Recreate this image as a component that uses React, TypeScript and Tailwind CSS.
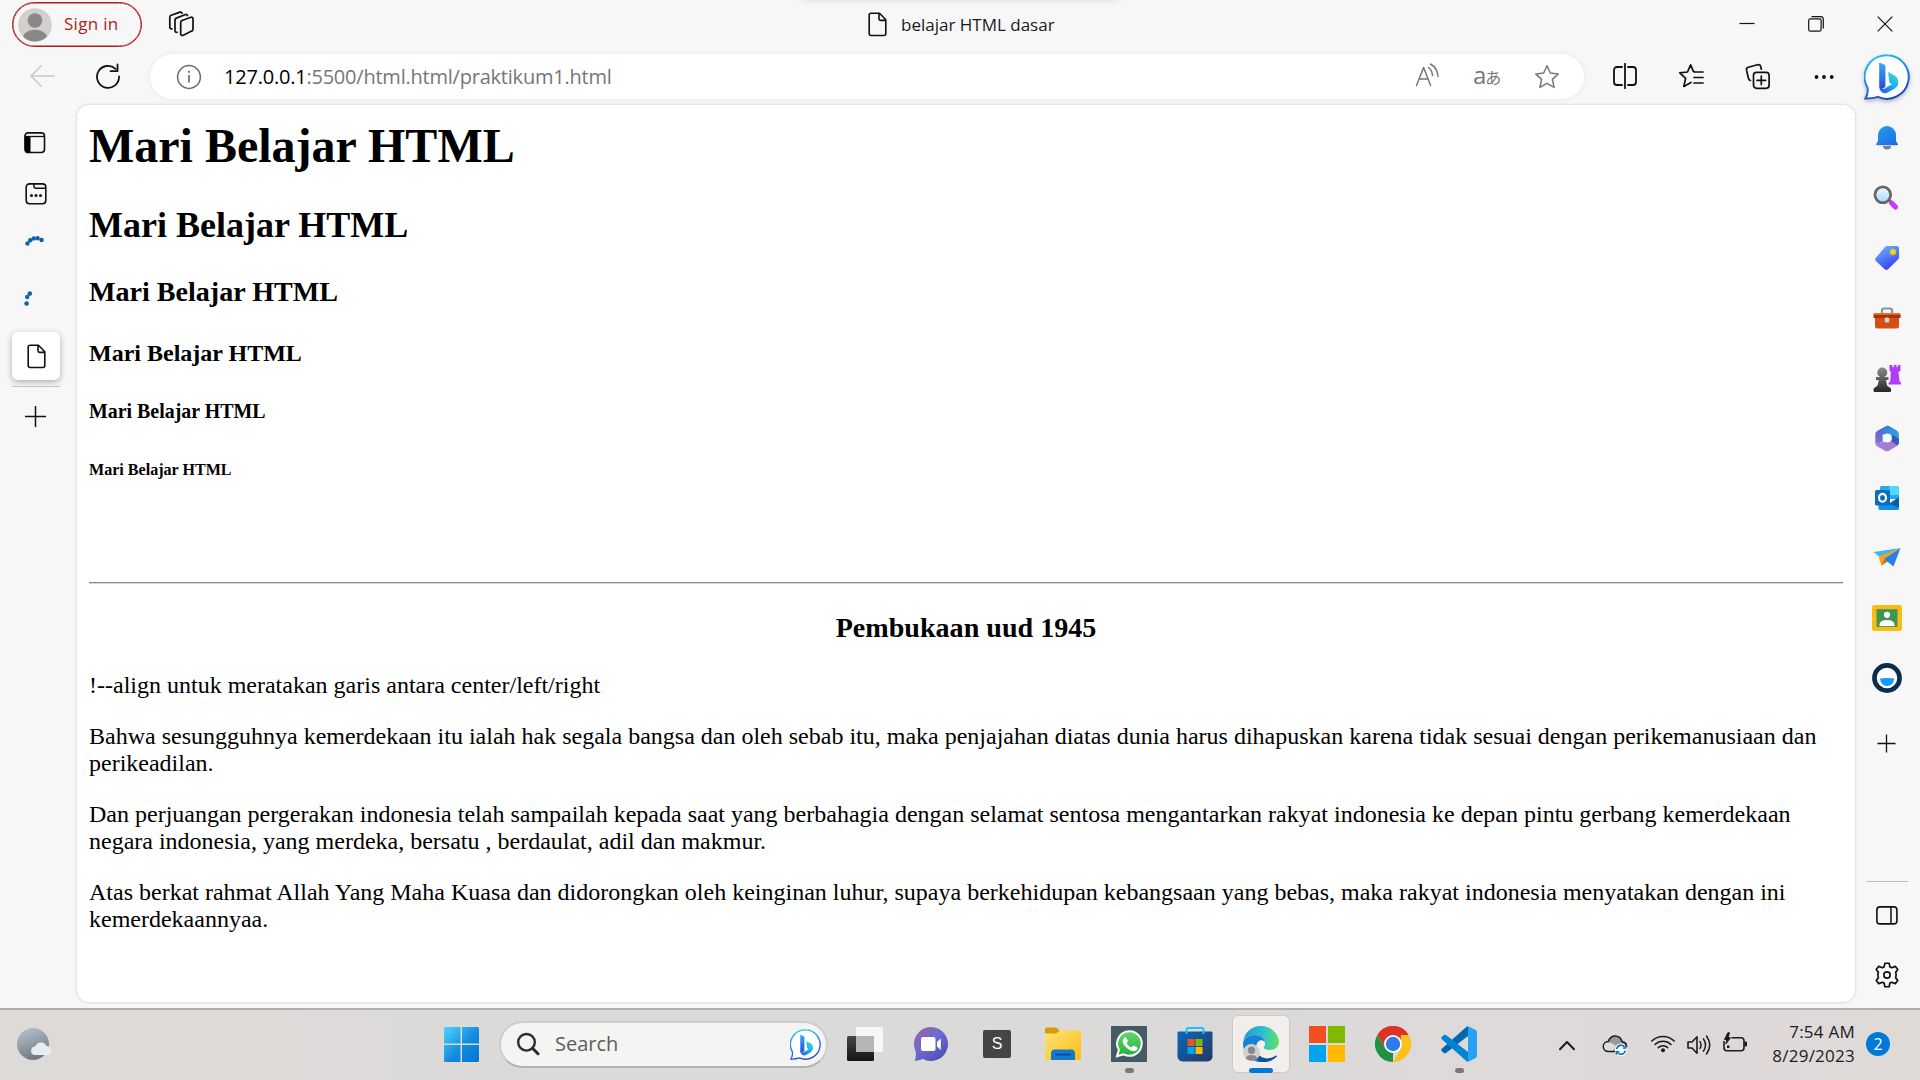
import React from 'react';

type SvgProps = {
  w: number;
  h: number;
  className?: string;
  children: React.ReactNode;
};

function Svg({ w, h, className = '', children }: SvgProps) {
  return (
    <svg width={w} height={h} viewBox={`0 0 ${w} ${h}`} fill="none" className={`block shrink-0 ${className}`}>
      {children}
    </svg>
  );
}

function DocIcon() {
  return (
    <Svg w={19} h={25}>
      <path d="M3 1.2h8.5l6.3 6.6V21.5a2 2 0 0 1-2 2H3.2a2 2 0 0 1-2-2V3a1.8 1.8 0 0 1 1.8-1.8zM11 1.5v5.3a1.6 1.6 0 0 0 1.6 1.6h5" stroke="#111" strokeWidth="1.6" strokeLinejoin="round" />
    </Svg>
  );
}

function BingIcon({ size, id }: { size: number; id: string }) {
  return (
    <svg width={size} height={size} viewBox="0 0 46 46" fill="none" className="block shrink-0">
      <defs>
        <linearGradient id={`${id}-ring`} x1="10" y1="2" x2="28" y2="46" gradientUnits="userSpaceOnUse">
          <stop stopColor="#18c8f0" />
          <stop offset="0.5" stopColor="#2a7cf0" />
          <stop offset="1" stopColor="#1a3fc4" />
        </linearGradient>
        <linearGradient id={`${id}-stem`} x1="0" y1="8" x2="0" y2="36" gradientUnits="userSpaceOnUse">
          <stop stopColor="#34aef8" />
          <stop offset="1" stopColor="#2348e0" />
        </linearGradient>
        <linearGradient id={`${id}-bowl`} x1="34" y1="20" x2="18" y2="40" gradientUnits="userSpaceOnUse">
          <stop stopColor="#2fe3c0" />
          <stop offset="0.45" stopColor="#1fb4f4" />
          <stop offset="1" stopColor="#2456e4" />
        </linearGradient>
      </defs>
      <path d="M23 1.2a21.8 21.8 0 1 1-9 41.7c-4 1.3-8 1.8-12.6 1.7 2-3.2 2.6-7 2.3-10.4A21.8 21.8 0 0 1 23 1.2z" fill="#fff" stroke={`url(#${id}-ring)`} strokeWidth="2" />
      <path d="M15.5 8.5l5 2.2q.9.5.9 1.6V33l-4.2 2.6q-2-.6-2-3V9z" fill={`url(#${id}-stem)`} />
      <path d="M24 18l7 3.7q3.2 2 3.2 6v1q0 3.6-3.4 5.8L23.600 38.600q-3 1.600-6-.6-2.200-1.800-2.300-5.400 2 3.400 5.500 1.800l7-4.200-2.300-1.600z" fill={`url(#${id}-bowl)`} />
    </svg>
  );
}

function Avatar({ size }: { size: number }) {
  return (
    <svg width={size} height={size} viewBox="0 0 34 34" className="block shrink-0">
      <circle cx="17" cy="17" r="16.800" fill="#d2d0ce" />
      <circle cx="17" cy="12.500" r="7.300" fill="#8a8886" />
      <path d="M5 28.500C8 19.500 26 19.500 29 28.500A16.800 16.800 0 0 1 5 28.500z" fill="#8a8886" />
    </svg>
  );
}

function TitleBar() {
  return (
    <header className="relative flex h-[54px] shrink-0 items-start pl-3">
      <div className="absolute left-[800px] top-[-8px] h-[8px] w-[320px] rounded-full shadow-[0_0_6px_rgba(0,0,0,0.12)]" />
      <button className="mt-[2px] flex h-[45px] w-[130px] items-center rounded-full border-[1.500px] border-[#b01c20] pl-[5px] shadow-[inset_0_0_0_0.500px_#b01c20]">
        <Avatar size={34} />
        <span className="ml-[12px] mt-[-2px] whitespace-nowrap text-[17px] leading-none tracking-[0.300px] text-[#b01c20]">Sign in</span>
      </button>
      <Svg w={26} h={26} className="ml-[26px] mt-[11px]">
        <g stroke="#111" strokeWidth="1.700" strokeLinejoin="round" strokeLinecap="round">
          <path d="M14 9.500l9-3.200a1.500 1.500 0 0 1 2 1.400v10.500a2 2 0 0 1-1.300 1.900l-9 4.300a1.500 1.500 0 0 1-2-1.400V11.500a2 2 0 0 1 1.300-2z" />
          <path d="M9 21.300a1.600 1.600 0 0 1-2-1.500V9a2 2 0 0 1 1.300-1.900l9.200-3.600q1.500-.4 2 1" />
          <path d="M4 17.800a1.600 1.600 0 0 1-2.200-1.500V6.200a2 2 0 0 1 1.300-1.900l9-3.200q1.400-.4 2 1" />
        </g>
      </Svg>
      <div className="ml-[674px] flex pt-[12px]">
        <DocIcon />
        <span className="ml-[14px] mt-[3px] whitespace-nowrap text-[17px] leading-[20px] text-[#1a1a1a]">belajar HTML dasar</span>
      </div>
      <div className="ml-auto flex gap-[53px] pr-[27px] pt-[16px]">
        <Svg w={16} h={16}><path d="M0.500 7.500h15" stroke="#111" strokeWidth="1.200" /></Svg>
        <Svg w={16} h={16}>
          <rect x="0.700" y="2.800" width="12.400" height="12.400" rx="1.800" stroke="#111" strokeWidth="1.200" />
          <path d="M3.500.7h9a2.800 2.800 0 0 1 2.800 2.800v9" stroke="#111" strokeWidth="1.200" />
        </Svg>
        <Svg w={16} h={16}><path d="M.7.7l14.600 14.600M15.300.7L.7 15.300" stroke="#111" strokeWidth="1.200" /></Svg>
      </div>
    </header>
  );
}

function AddressRow() {
  return (
    <div className="flex h-[45px] shrink-0 items-center">
      <Svg w={26} h={24} className="ml-[29px] mt-[-2px]">
        <path d="M12 2L2 12l10 10M2 12h23" stroke="#c9c9c9" strokeWidth="1.600" strokeLinecap="round" strokeLinejoin="round" />
      </Svg>
      <Svg w={26} h={26} className="ml-[40px] mt-[-2px]">
        <path d="M20.500 5.800A11 11 0 1 0 24 13.500M22.500 1.500v6.700h-7" stroke="#111" strokeWidth="1.800" strokeLinecap="round" strokeLinejoin="round" />
      </Svg>
      <div className="ml-[29px] flex h-[45px] w-[1434px] items-center rounded-full bg-white shadow-[0_0_5px_rgba(0,0,0,0.08)]">
        <Svg w={26} h={26} className="ml-[26px]">
          <circle cx="13" cy="13" r="11.400" stroke="#6b6b6b" strokeWidth="1.500" />
          <path d="M13 11v7.500" stroke="#6b6b6b" strokeWidth="1.700" />
          <circle cx="13" cy="7.800" r="1.100" fill="#6b6b6b" />
        </Svg>
        <span className="ml-[22px] whitespace-nowrap text-[20px] leading-none tracking-[-0.220px] text-[#767676]"><span className="text-black">127.0.0.1</span>:5500/html.html/praktikum1.html</span>
        <Svg w={26} h={24} className="ml-auto mt-[-3px]">
          <path d="M1.500 22.500L8.600 4.500l7 18M4 16h9.200" stroke="#777" strokeWidth="1.500" strokeLinecap="round" strokeLinejoin="round" />
          <path d="M13.500 4.500q3.500 2.500 4 8M15.500 1q7 4 7.500 12.500" stroke="#777" strokeWidth="1.500" strokeLinecap="round" />
        </Svg>
        <div className="ml-[32px] flex w-[29px] items-baseline text-[#777]">
          <span className="mt-[-6px] text-[24px] leading-[24px] tracking-[-1px]">a</span>
          <span className="font-['Noto_Sans_CJK_JP',sans-serif] text-[16px] leading-[24px]">あ</span>
        </div>
        <Svg w={26} h={26} className="ml-[32px] mr-[24px]">
          <path d="M13 1.700l3.300 7.300 8 .9-5.900 5.500 1.700 8-7.100-4-7.100 4 1.700-8L1.700 9.900l8-.9z" stroke="#777" strokeWidth="1.500" strokeLinejoin="round" />
        </Svg>
      </div>
      <Svg w={26} h={26} className="ml-[28px] mt-[-1px]">
        <path d="M10 4H5a3 3 0 0 0-3 3v12a3 3 0 0 0 3 3h5M16 4h5a3 3 0 0 1 3 3v12a3 3 0 0 1-3 3h-5M13 .8v24.400" stroke="#111" strokeWidth="1.800" strokeLinecap="round" />
      </Svg>
      <Svg w={27} h={26} className="ml-[40px] mt-[-1px]">
        <path d="M16.500 8.800l-1-.1L12.600 1.800 9.500 9l-7.700.9 5.800 5.500-1.800 8.100 7.200-4M17 9h8M16 14.500h9M16 20h9" stroke="#111" strokeWidth="1.700" strokeLinejoin="round" strokeLinecap="round" />
      </Svg>
      <Svg w={26} h={27} className="ml-[40px] mt-[-1px]">
        <rect x="8.500" y="9.300" width="15.600" height="16" rx="3" stroke="#111" strokeWidth="1.700" />
        <path d="M16.300 13v8.500M12 17.300h8.600M5.500 17.500q-1.600-.3-2-2L1.500 7.200q-.4-2.300 1.700-3L12.500 1.800q2.500-.5 3.200 1.700l.6 2.700" stroke="#111" strokeWidth="1.700" strokeLinecap="round" />
      </Svg>
      <Svg w={20} h={6} className="ml-[43px]">
        <circle cx="2.500" cy="3" r="1.900" fill="#111" /><circle cx="10" cy="3" r="1.900" fill="#111" /><circle cx="17.700" cy="3" r="1.900" fill="#111" />
      </Svg>
      <div className="ml-[30px] drop-shadow-[0_2px_2px_rgba(0,0,0,0.25)]"><BingIcon size={46} id="bing-top" /></div>
    </div>
  );
}

function TabRail() {
  return (
    <aside className="flex w-[77px] shrink-0 flex-col">
      <Svg w={22} h={22} className="ml-[24px] mt-[27px]">
        <rect x=".9" y=".9" width="19.600" height="19.600" rx="3.200" stroke="#111" strokeWidth="1.600" />
        <path d="M1 4.700h5.500v16H4a3 3 0 0 1-3-3z" fill="#000" /><path d="M1 4.500h19.500" stroke="#111" strokeWidth="1.300" />
      </Svg>
      <Svg w={22} h={22} className="ml-[25px] mt-[29px]">
        <rect x="1.200" y=".9" width="19.600" height="19.800" rx="3.200" stroke="#111" strokeWidth="1.600" />
        <path d="M9 1v2.500a1.800 1.800 0 0 0 1.800 1.800h10" stroke="#111" strokeWidth="1.500" />
        <circle cx="6.500" cy="12.500" r="1.500" fill="#111" /><circle cx="11" cy="12.500" r="1.500" fill="#111" /><circle cx="15.500" cy="12.500" r="1.500" fill="#111" />
      </Svg>
      <Svg w={20} h={11} className="ml-[25px] mt-[30px]">
        <g fill="#0d62a9"><circle cx="2.500" cy="8.500" r="2.200" /><circle cx="5.200" cy="5.200" r="2.200" /><circle cx="8.800" cy="3.400" r="2.200" /><circle cx="12.600" cy="3.200" r="2.200" /><circle cx="16.600" cy="5" r="2.200" /></g>
      </Svg>
      <Svg w={10} h={16} className="ml-[24px] mt-[45px]">
        <g fill="#0d62a9"><circle cx="5.800" cy="2.600" r="2.300" /><circle cx="3.200" cy="6" r="2.200" /><circle cx="2.600" cy="12.500" r="2.300" /></g>
      </Svg>
      <div className="ml-[12px] mt-[25px] flex h-[48px] w-[48px] items-center justify-center rounded-[6px] bg-white shadow-[0_2px_6px_rgba(0,0,0,0.3)]"><DocIcon /></div>
      <div className="ml-[12px] mt-[6px] h-px w-[48px] bg-[#c4c4c4]" />
      <Svg w={22} h={22} className="ml-[24px] mt-[18px]"><path d="M11.500 1v21M1 11.500h21" stroke="#111" strokeWidth="1.500" /></Svg>
    </aside>
  );
}

const paragraphs: [string, string][] = [
  ['Bahwa sesungguhnya kemerdekaan itu ialah hak segala bangsa dan oleh sebab itu, maka penjajahan diatas dunia harus dihapuskan karena tidak sesuai dengan perikemanusiaan dan', 'perikeadilan.'],
  ['Dan perjuangan pergerakan indonesia telah sampailah kepada saat yang berbahagia dengan selamat sentosa mengantarkan rakyat indonesia ke depan pintu gerbang kemerdekaan', 'negara indonesia, yang merdeka, bersatu , berdaulat, adil dan makmur.'],
  ['Atas berkat rahmat Allah Yang Maha Kuasa dan didorongkan oleh keinginan luhur, supaya berkehidupan kebangsaan yang bebas, maka rakyat indonesia menyatakan dengan ini', 'kemerdekaannyaa.'],
];

function Page() {
  return (
    <main className="w-[1778px] shrink-0 rounded-[12px] bg-white px-3 pt-[13px] font-['Liberation_Serif',serif] text-[24px] leading-[27px] text-black shadow-[0_0_3px_rgba(0,0,0,0.22)]">
      <h1 className="text-[48px] font-bold leading-[55px]">Mari Belajar HTML</h1>
      <h2 className="mt-[32px] text-[36px] font-bold leading-[41px]">Mari Belajar HTML</h2>
      <h3 className="mt-[30px] text-[28.080px] font-bold leading-[32px]">Mari Belajar HTML</h3>
      <h4 className="mt-[32px] text-[24px] font-bold leading-[27px]">Mari Belajar HTML</h4>
      <h5 className="mt-[33px] text-[19.920px] font-bold leading-[23px]">Mari Belajar HTML</h5>
      <h6 className="mt-[38px] text-[16.080px] font-bold leading-[18px]">Mari Belajar HTML</h6>
      <hr className="mt-[103px] h-[2px] border-0 border-t border-[#8a8a8a] bg-[#d8d8d8]" />
      <h3 className="mt-[28px] text-center text-[28.080px] font-bold leading-[32px]">Pembukaan uud 1945</h3>
      <p className="mt-[28px]">!--align untuk meratakan garis antara center/left/right</p>
      {paragraphs.map(([first, second]) => (
        <p key={second} className="mt-6 whitespace-nowrap">{first}<br />{second}</p>
      ))}
    </main>
  );
}

function Cell({ children }: { children: React.ReactNode }) {
  return <div className="flex h-[60px] w-[42px] shrink-0 items-center justify-center">{children}</div>;
}

function SideBar() {
  return (
    <aside className="ml-[11px] flex w-[42px] shrink-0 flex-col items-center pt-[3px]">
      <Cell>
        <Svg w={24} h={26}>
          <defs><linearGradient id="bell" x1="4" y1="0" x2="18" y2="22" gradientUnits="userSpaceOnUse"><stop stopColor="#1ea2e8" /><stop offset="1" stopColor="#2568e8" /></linearGradient></defs>
          <path d="M8 21h8a4 3.500 0 0 1-8 0z" fill="#7b7f86" />
          <path d="M12 1a9 9 0 0 1 9 9v6l1.800 3q.5 1.300-1 1.300H2.200q-1.500 0-1-1.300L3 16v-6a9 9 0 0 1 9-9z" fill="url(#bell)" />
        </Svg>
      </Cell>
      <Cell>
        <Svg w={28} h={26}>
          <defs><linearGradient id="lens" x1="0" y1="4" x2="0" y2="16" gradientUnits="userSpaceOnUse"><stop stopColor="#e8f6fe" /><stop offset="1" stopColor="#b0dafa" /></linearGradient></defs>
          <path d="M15 14l5 5" stroke="#777" strokeWidth="3" />
          <path d="M18.500 18l4 4" stroke="#c53cf2" strokeWidth="5.200" strokeLinecap="round" />
          <circle cx="9.800" cy="9.800" r="7.900" fill="url(#lens)" stroke="#686868" strokeWidth="2.800" />
        </Svg>
      </Cell>
      <Cell>
        <Svg w={26} h={26}>
          <defs><linearGradient id="tag" x1="8" y1="4" x2="18" y2="24" gradientUnits="userSpaceOnUse"><stop stopColor="#62a4fc" /><stop offset="1" stopColor="#3a3df5" /></linearGradient></defs>
          <path d="M13 1h9.500a2.500 2.500 0 0 1 2.500 2.500v9q0 1-.8 1.800L14 24.300q-1.700 1.400-3.400 0L1.900 16q-1.400-1.600 0-3.200L11.200 1.800Q12 1 13 1z" fill="url(#tag)" />
          <circle cx="19" cy="7" r="2.300" fill="#cdd7f5" stroke="#f4c400" strokeWidth="2" />
        </Svg>
      </Cell>
      <Cell>
        <Svg w={28} h={22}>
          <path d="M9 6V3.500A2 2 0 0 1 11 1.500h6a2 2 0 0 1 2 2V6" stroke="#8d9298" strokeWidth="2.200" />
          <path d="M2 9h24v10a2.500 2.500 0 0 1-2.500 2.500h-19A2.500 2.500 0 0 1 2 19z" fill="#d64e16" />
          <path d="M2 6h24q1.500 0 1.500 1.500V11H.5V7.500Q.5 6 2 6z" fill="#a8320b" /><path d="M1 6h26v1.800H1z" fill="#f07224" />
          <rect x="11.800" y="10.500" width="4.400" height="5" rx="1.200" fill="#d0d5d9" />
        </Svg>
      </Cell>
      <Cell>
        <Svg w={28} h={28}>
          <defs><linearGradient id="pawn" x1="0" y1="4" x2="0" y2="27" gradientUnits="userSpaceOnUse"><stop stopColor="#8a8a8a" /><stop offset="1" stopColor="#292929" /></linearGradient></defs>
          <path d="M16.500 1h2.700v2h1.600V1h2.700v2h1.500V1h2.500v5.500L25.500 8l1 9 1.500 2v1.500H15.500V19l1.800-2 .5-9-1.300-1.500z" fill="#b13df5" />
          <circle cx="9.300" cy="8.500" r="5" fill="url(#pawn)" />
          <path d="M3 13h12.500v3H13l1 5.500 4 3V27a1 1 0 0 1-1 1H1.600a1 1 0 0 1-1-1v-2.500l4-3L5.800 16H3z" fill="url(#pawn)" />
        </Svg>
      </Cell>
      <Cell>
        <Svg w={26} h={27}>
          <defs>
            <linearGradient id="m1" x1="4" y1="20" x2="14" y2="2" gradientUnits="userSpaceOnUse"><stop stopColor="#8c70cf" /><stop offset="1" stopColor="#3f66ca" /></linearGradient>
            <linearGradient id="m2" x1="12" y1="3" x2="25" y2="18" gradientUnits="userSpaceOnUse"><stop stopColor="#2e86e0" /><stop offset="1" stopColor="#42a4e8" /></linearGradient>
          </defs>
          <path d="M13 .8l-9.500 5A4 4 0 0 0 1.300 9.500v9.200L8.700 17V9.500L16 2q-1.500-1-3-1.200z" fill="url(#m1)" />
          <path d="M13 .8q1.500-.2 3 .7l7 4.200q1.900 1.300 1.900 3.700v8.200L17.500 13V9.500H8.700q0-6 4.300-8.700z" fill="url(#m2)" />
          <path d="M1.300 18.700L8.700 17h4.500l7-3 4.500 4.500q-.5 1.500-2 2.500L15 25.700q-2 1-4 0L3.500 21.500q-1.800-1-2.200-2.800z" fill="#a47bd5" />
          <path d="M17.500 9.500l7.400 4v5l-1.500 2-6-4.500z" fill="#3458b4" /><circle cx="13.300" cy="13" r="4.500" fill="#f7f7f7" />
        </Svg>
      </Cell>
      <Cell>
        <Svg w={26} h={26}>
          <path d="M6 2.500Q6 1 7.500 1h16Q25 1 25 2.500V14H6z" fill="#28a8ea" /><path d="M15.500 1h8Q25 1 25 2.500V10h-9.500z" fill="#50d9ff" /><path d="M4.500 13l10 6L25 12v11.500q0 1.500-1.500 1.500H6q-1.500 0-1.500-1.500z" fill="#1490df" /><path d="M15 19l10-6.500v10z" fill="#0a5ea8" />
          <rect x="1" y="5" width="15" height="15.500" rx="1.500" fill="#0f6cbd" /><ellipse cx="8.500" cy="12.800" rx="3.500" ry="3.900" stroke="#fff" strokeWidth="2.100" />
        </Svg>
      </Cell>
      <Cell>
        <Svg w={28} h={22}>
          <path d="M.5 5L27.500 1 7 10z" fill="#3fb2f7" /><path d="M5.500 9.500L27.500 1 12 12.500 8.500 19z" fill="#f1a51b" /><path d="M8.500 18.500l3-6 3 2z" fill="#c86b07" /><path d="M11 12L27.500 1l-7 18.500z" fill="#277fe8" />
        </Svg>
      </Cell>
      <Cell>
        <Svg w={30} h={26}>
          <rect width="30" height="26" rx="2.500" fill="#f9bd13" /><rect x="4.500" y="4.200" width="21" height="17.600" fill="#419553" />
          <circle cx="15" cy="9.800" r="3.100" fill="#fff" /><path d="M7.500 21v-2q1-4 7.500-4t7.500 4v2z" fill="#fff" />
        </Svg>
      </Cell>
      <Cell>
        <Svg w={30} h={30}>
          <circle cx="15" cy="15" r="12.600" fill="#fff" stroke="#0a2c4e" strokeWidth="4.600" /><path d="M8 15.500q7-1 14.200 0-.8 7.300-7.200 7.400-6.200-.1-7-7.400z" fill="#139bf8" />
        </Svg>
      </Cell>
      <Svg w={20} h={20} className="mt-[26px]"><path d="M9.500 .5v18M.5 9.500h18" stroke="#111" strokeWidth="1.300" /></Svg>
      <div className="mt-[127px] h-px w-[42px] bg-[#bdbdbd]" />
      <Svg w={22} h={19} className="mt-[24px]">
        <rect x=".9" y=".9" width="20" height="17" rx="3" stroke="#111" strokeWidth="1.600" /><path d="M15 1v17" stroke="#111" strokeWidth="1.500" />
      </Svg>
      <svg width="30" height="30" viewBox="0 0 24 24" fill="none" className="mt-[35px] block shrink-0">
        <path d="M10.300 2.600h3.400l.6 2.900 1.500.7 2.800-1.100 2 2.500-1.700 2.300c.3.700.4 1.300.4 2.100s-.1 1.400-.4 2.100l1.700 2.300-2 2.500-2.800-1.100-1.500.7-.6 2.900h-3.400l-.6-2.900-1.500-.7-2.800 1.100-2-2.500 1.700-2.300c-.3-.7-.4-1.300-.4-2.100s.1-1.400.4-2.100L3.400 7.600l2-2.500 2.800 1.100 1.500-.7z" stroke="#111" strokeWidth="1.350" strokeLinejoin="round" />
        <circle cx="12" cy="12" r="2.500" stroke="#111" strokeWidth="1.350" />
      </svg>
    </aside>
  );
}

function Slot({ children, indicator = false }: { children: React.ReactNode; indicator?: boolean }) {
  return (
    <div className="relative flex h-[70px] w-[66px] shrink-0 items-center justify-center pb-[2px]">
      {children}
      {indicator && <span className="absolute bottom-[7px] left-[29px] h-[5px] w-[9px] rounded-full bg-[#7c7a79]" />}
    </div>
  );
}

function TaskApps() {
  return (
    <div className="ml-[4px] flex">
      <Slot>
        <Svg w={36} h={34}>
          <defs><linearGradient id="tv" x1="0" y1="10" x2="0" y2="34" gradientUnits="userSpaceOnUse"><stop stopColor="#454545" /><stop offset="1" stopColor="#151515" /></linearGradient></defs>
          <rect y="9" width="27" height="25" rx="1.500" fill="url(#tv)" /><rect x="9" width="27" height="25" rx="1.500" fill="#fff" fillOpacity=".78" />
          <path d="M9 9h18v16H9z" fill="#b5b5b5" />
        </Svg>
      </Slot>
      <Slot>
        <Svg w={34} h={34}>
          <defs><linearGradient id="chat" x1="4" y1="4" x2="26" y2="30" gradientUnits="userSpaceOnUse"><stop stopColor="#9362ae" /><stop offset=".5" stopColor="#696bd0" /><stop offset="1" stopColor="#5550bd" /></linearGradient></defs>
          <path d="M17 0a17 17 0 1 1-8 32Q5 33.500.6 34 2.600 29 1.500 24A17 17 0 0 1 17 0z" fill="url(#chat)" />
          <rect x="7" y="10" width="14.500" height="14" rx="2" fill="#fff" /><path d="M23 15l3.800-3.500V23L23 19.500z" fill="#fff" />
        </Svg>
      </Slot>
      <Slot>
        <div className="flex h-[28px] w-[28px] items-center justify-center rounded-[2px] bg-[#454545] font-['Liberation_Sans',sans-serif] text-[16px] leading-none text-white">S</div>
      </Slot>
      <Slot>
        <Svg w={36} h={34}>
          <defs><linearGradient id="folder" x1="4" y1="5" x2="30" y2="33" gradientUnits="userSpaceOnUse"><stop stopColor="#ffdf70" /><stop offset="1" stopColor="#fcc11b" /></linearGradient></defs>
          <path d="M0 2q0-1.500 1.500-1.500H10q1.500 0 2.500 1L15 4H34.500Q36 4 36 5.500V9H0z" fill="#d99a07" />
          <path d="M0 6.500h11l4-3H34.500Q36 3.500 36 5v26.500q0 1.500-1.500 1.500H1.500Q0 33 0 31.500z" fill="url(#folder)" />
          <path d="M6 33v-6.500a4 4 0 0 1 4-4h16a4 4 0 0 1 4 4V33z" fill="#1279cc" /><path d="M11 27.600h14" stroke="#0b4b8f" strokeWidth="1.800" strokeLinecap="round" />
        </Svg>
      </Slot>
      <Slot indicator>
        <Svg w={36} h={36}>
          <defs><linearGradient id="wa" x1="0" y1="6" x2="0" y2="30" gradientUnits="userSpaceOnUse"><stop stopColor="#60d66c" /><stop offset="1" stopColor="#27b13d" /></linearGradient></defs>
          <rect width="36" height="36" fill="#455a64" />
          <path d="M18.500 5.200a12.300 12.300 0 1 1-5.800 23.200L6 30.300l1.900-6.500A12.300 12.300 0 0 1 18.500 5.200z" fill="url(#wa)" stroke="#fff" strokeWidth="2" />
          <path d="M13.500 11.500q.8-.6 1.600 0l1.800 3.600q0 .8-1.400 2 1.700 3.300 4.900 4.500l1.700-1.900q.5-.4 1 0l3 1.600q.6.4.4 1.200-.6 2.700-4 2.700-4.500-.4-8.200-4.600-2.500-3-2.700-5.200 0-2.300 1.900-3.900z" fill="#fff" />
        </Svg>
      </Slot>
      <Slot>
        <Svg w={36} h={36}>
          <defs><linearGradient id="store" x1="4" y1="6" x2="32" y2="36" gradientUnits="userSpaceOnUse"><stop stopColor="#0b66b8" /><stop offset="1" stopColor="#233a68" /></linearGradient></defs>
          <path d="M.5 6.500q0-1 1-1h33q1 0 1 1v24a5 5 0 0 1-5 5h-25a5 5 0 0 1-5-5z" fill="url(#store)" />
          <path d="M9.500 8V3.500q0-1.500 1.500-1.500h14q1.500 0 1.500 1.500V8" stroke="#27bdf5" strokeWidth="1.900" />
          <path d="M10.500 13h7v7h-7z" fill="#f25022" /><path d="M18.500 13h7v7h-7z" fill="#7fba00" /><path d="M10.500 21h7v7h-7z" fill="#00a4ef" /><path d="M18.500 21h7v7h-7z" fill="#ffb900" />
        </Svg>
      </Slot>
      <Slot>
        <div className="relative flex h-[56px] w-[56px] items-center justify-center rounded-[5px] bg-[#f1eeec] shadow-[0_0_1px_1px_rgba(0,0,0,0.07)]">
          <Svg w={36} h={36}>
            <defs>
              <linearGradient id="ed1" x1="4" y1="10" x2="36" y2="14" gradientUnits="userSpaceOnUse"><stop stopColor="#249fd6" /><stop offset=".5" stopColor="#2cc3d0" /><stop offset="1" stopColor="#62e05c" /></linearGradient>
              <linearGradient id="ed2" x1="0" y1="12" x2="14" y2="34" gradientUnits="userSpaceOnUse"><stop stopColor="#1487cf" /><stop offset="1" stopColor="#157ee0" /></linearGradient>
            </defs>
            <path d="M18 0A18 18 0 0 1 36 15c0 6-4 9-9 9-4 0-6.500-1.500-6.500-2.700 0-1 1.500-1.600 1.500-4.300 0-4-4.500-8-11-8C5 9 1 12 .2 16 1 7 8 0 18 0z" fill="url(#ed1)" />
            <path d="M0 18c0-5 4.500-9 11-9 6.500 0 10.500 3.500 11 7.500-1.500-2-3.500-2.500-5-2-4 2-5 6-3.500 11 1.500 5.500 5 9 9.500 9.800A18 18 0 0 1 0 18z" fill="url(#ed2)" />
            <path d="M14 17c-2 3-1.500 9 3 13 4 3 10 3.500 15.500-.2 1-.7 1.800.2 1.200 1A18 18 0 0 1 19 36C10 35 7 22 14 17z" fill="#124f9c" />
            <path d="M17.500 14.600q4 0 4.300 2.600 0 2-1.300 3.800.2 3.500 6.500 4 4 .2 7-1.200-2 3.700-7.500 4.200-7.500.5-11-5-2-5 2-8.400z" fill="#f1eeec" />
          </Svg>
          <div className="absolute bottom-[11px] left-[10px]"><Avatar size={17} /></div>
          <span className="absolute bottom-[-1px] left-[16px] h-[5px] w-[24px] rounded-full bg-[#0078d7]" />
        </div>
      </Slot>
      <Slot>
        <div className="grid grid-cols-2 gap-[2px]">
          <i className="size-[17px] bg-[#f25022]" /><i className="size-[17px] bg-[#7fba00]" /><i className="size-[17px] bg-[#00a4ef]" /><i className="size-[17px] bg-[#ffb900]" />
        </div>
      </Slot>
      <Slot>
        <Svg w={36} h={36}>
          <path d="M2.400 9A18 18 0 0 1 33.600 9L18 18z" fill="#dc3527" /><path d="M2.400 9l7.800 13.500L18 27v0L18 36A18 18 0 0 1 2.400 9z" fill="#1f9244" /><path d="M33.600 9A18 18 0 0 1 18 36l7.800-13.500L25.800 9z" fill="#fcc21b" />
          <path d="M2.400 9L10.200 22.500 18 18l0-9H33.600A18 18 0 0 0 2.400 9z" fill="#dc3527" /><circle cx="18" cy="18" r="9" fill="#fff" /><circle cx="18" cy="18" r="7.200" fill="#2f7bee" />
        </Svg>
      </Slot>
      <Slot indicator>
        <Svg w={36} h={36}>
          <path d="M.8 22.800q-1.200 1.200 0 2.300l1.900 1.800q1.200.8 2.300 0L27 10V.2q-1 0-1.700.8z" fill="#0068b0" />
          <path d="M.8 13.200q-1.200-1.200 0-2.300l1.900-1.800q1.200-.8 2.300 0L27 26v9.800q-1 0-1.700-.8z" fill="#0085d0" />
          <path d="M27 .2l7.500 3.500Q36 4.500 36 6v24q0 1.500-1.500 2.300L27 35.800q-1 .3-1.700-.8 1.700 1 1.700-1V2q0-2-1.700-1 .7-1 1.700-.8z" fill="#26a2f0" />
        </Svg>
      </Slot>
    </div>
  );
}

function Tray() {
  return (
    <div className="ml-[51px] flex items-center">
      <Svg w={18} h={12} className="ml-[15px]"><path d="M2 10.200L9 3l7 7.200" stroke="#1b1b1b" strokeWidth="2" strokeLinecap="round" strokeLinejoin="round" /></Svg>
      <Svg w={26} h={24} className="ml-[26px] mt-[2px]">
        <path d="M6.500 17.500a5 5 0 0 1-.3-10Q8.500 2 13 2q5.500 0 7 5.500 4.500.7 4.500 5a5 5 0 0 1-5 5z" fill="#999" stroke="#1b1b1b" strokeWidth="1.600" />
        <path d="M6 16.500a4 4 0 0 1 0-8q4-.5 8 4l-3 4z" fill="#ddd" />
        <circle cx="19" cy="15.800" r="6.300" fill="#fff" /><path d="M14.700 15a4.400 4.400 0 0 1 8-1.800M23.300 16.500a4.400 4.400 0 0 1-8 1.800" stroke="#0f6cbd" strokeWidth="1.600" /><path d="M23.700 11v3.200h-3M14.300 20.800v-3.200h3" stroke="#0f6cbd" strokeWidth="1.200" />
      </Svg>
      <Svg w={26} h={20} className="ml-[22px] mt-[-2px]">
        <g stroke="#1b1b1b" strokeWidth="1.600" strokeLinecap="round"><path d="M1.800 7a16 16 0 0 1 22.400 0M5 10.500a11.500 11.500 0 0 1 16 0M8.300 13.700a6.800 6.800 0 0 1 9.400 0" /></g><circle cx="13" cy="16.300" r="2" fill="#1b1b1b" />
      </Svg>
      <Svg w={26} h={22} className="ml-[10px] mt-[-1px]">
        <path d="M2 8h4l5-5.200v16.400L6 14H2z" stroke="#1b1b1b" strokeWidth="1.600" strokeLinejoin="round" />
        <path d="M14 7.500q2 3.500 0 7M17.500 4.800q4 6.200 0 12.400M20.500 2q6.500 9 0 18" stroke="#1b1b1b" strokeWidth="1.500" strokeLinecap="round" />
      </Svg>
      <Svg w={26} h={22} className="ml-[10px] mt-[-4px]">
        <path d="M9.500 5.700H19a3 3 0 0 1 3 3v7a3 3 0 0 1-3 3H5a3 3 0 0 1-3-3V9" stroke="#1b1b1b" strokeWidth="1.600" /><path d="M22.500 9.500H24q1 0 1 1v3q0 1-1 1h-1.500z" fill="#1b1b1b" />
        <path d="M5.800.8L2.500 7.500H5L3.800 12 8.500 5.800H6L7.500.8z" fill="#1b1b1b" stroke="#1b1b1b" strokeLinejoin="round" /><path d="M5 13.500h2.500V16H5z" fill="#1b1b1b" />
      </Svg>
      <div className="mt-[-3px] w-[107px] text-right text-[17px] leading-[24px] tracking-[0.250px] text-[#1b1b1b]">
        <div className="whitespace-nowrap">7:54 AM</div>
        <div className="whitespace-nowrap">8/29/2023</div>
      </div>
      <div className="ml-[11px] mt-[-2px] flex h-[24px] w-[24px] items-center justify-center rounded-full bg-[#0078d7] text-[16px] leading-none text-white">2</div>
    </div>
  );
}

function Taskbar() {
  return (
    <footer className="flex h-[72px] shrink-0 items-center border-t-2 border-[#b0afae] bg-linear-to-r from-[#dedad8] via-[#dadad9] to-[#dfd9d8]">
      <Svg w={36} h={34} className="ml-[16px] mt-[-2px]">
        <defs><linearGradient id="moon" x1="10" y1="0" x2="22" y2="33" gradientUnits="userSpaceOnUse"><stop stopColor="#b5c2ce" /><stop offset="1" stopColor="#6c757e" /></linearGradient></defs>
        <circle cx="17" cy="17" r="16" fill="url(#moon)" /><path d="M18.500 28a4.300 4.300 0 0 1 .8-8.500 6 6 0 0 1 11-.8Q35.500 20 35 24.500q-.5 3.500-4 3.500z" fill="#e8edf2" />
      </Svg>
      <Svg w={35} h={35} className="ml-[392px] mt-[-1px]">
        <defs><linearGradient id="win" x1="0" y1="0" x2="35" y2="35" gradientUnits="userSpaceOnUse"><stop stopColor="#50d4fd" /><stop offset=".55" stopColor="#128be0" /><stop offset="1" stopColor="#0275d3" /></linearGradient></defs>
        <path d="M1 0h15.500v16.500H0V1zM18 0h16l1 1v15.500H18zM0 18h16.500v17H1l-1-1zM18 18h17v16l-1 1H18z" fill="url(#win)" />
      </Svg>
      <div className="ml-[20px] mt-[-2px] flex h-[47px] w-[329px] items-center rounded-full border-2 border-[#cfcdcc] border-b-[#b4b3b2] bg-[#f4f4f3] pl-[15px]">
        <Svg w={24} h={24}>
          <circle cx="10.500" cy="10.300" r="8.300" stroke="#2b2b2b" strokeWidth="2.400" /><path d="M16.500 16.300l5.500 5.500" stroke="#2b2b2b" strokeWidth="3" strokeLinecap="round" />
        </Svg>
        <span className="ml-[15px] text-[20px] leading-none text-[#5c5c5c]">Search</span>
        <div className="ml-auto mr-[5px]"><BingIcon size={31} id="bing-search" /></div>
      </div>
      <TaskApps />
      <Tray />
    </footer>
  );
}

export default function App() {
  return (
    <div className="flex h-[1080px] w-[1920px] flex-col overflow-hidden bg-[#f7f7f7] font-['Open_Sans','Noto_Sans',sans-serif]">
      <TitleBar />
      <AddressRow />
      <div className="mb-[6px] mt-[6px] flex min-h-0 flex-1">
        <TabRail />
        <Page />
        <SideBar />
      </div>
      <Taskbar />
    </div>
  );
}
